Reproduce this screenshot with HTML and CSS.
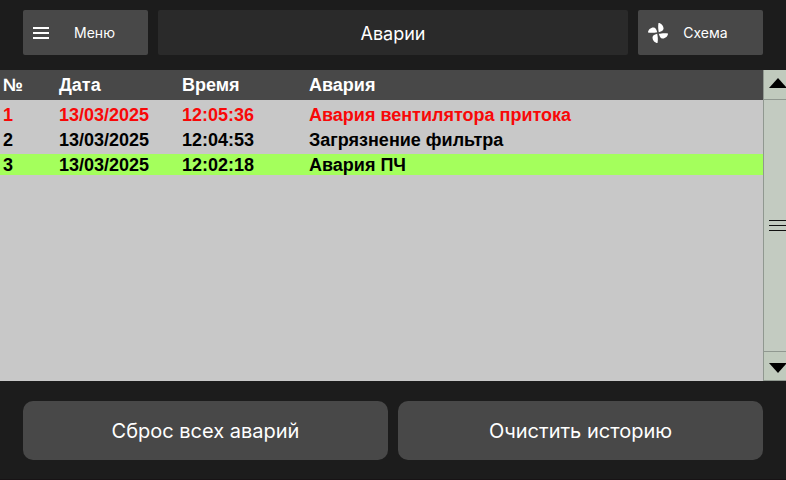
FILE: index.html
```html
<!DOCTYPE html>
<html lang="ru">
<head>
    <meta charset="UTF-8">
    <meta name="viewport" content="width=device-width, initial-scale=1.0">
    <title>Аварии</title>
    <link rel="stylesheet" href="styles.css">
</head>
<body>

    <header class="topbar">
        <button type="button" class="nav-btn">
            <svg class="nav-icon" viewBox="0 0 20 20" aria-hidden="true">
                <path d="M2 5h16M2 10h16M2 15h16" stroke="#fff" stroke-width="2"/>
            </svg>
            <span class="nav-label">Меню</span>
        </button>
        <h1 class="title">Аварии</h1>
        <button type="button" class="nav-btn nav-scheme">
            <svg class="nav-icon" viewBox="0 0 20 20" aria-hidden="true">
                <g fill="#fff">
                    <path id="blade" d="M10.500 0C13 0 15.500 2.500 15.500 5.500C15.500 7.500 14 8.200 10.800 9.200C10.300 7 9.800 3 10.500 0Z"/>
                    <use href="#blade" transform="rotate(90 10 10)"/>
                    <use href="#blade" transform="rotate(180 10 10)"/>
                    <use href="#blade" transform="rotate(270 10 10)"/>
                </g>
            </svg>
            <span class="nav-label">Схема</span>
        </button>
    </header>

    <main class="log">
        <div class="log-body">
            <table class="alarms">
                <thead>
                    <tr>
                        <th class="col-num">№</th>
                        <th class="col-date">Дата</th>
                        <th class="col-time">Время</th>
                        <th>Авария</th>
                    </tr>
                </thead>
                <tbody>
                    <tr class="active">
                        <td>1</td>
                        <td>13/03/2025</td>
                        <td>12:05:36</td>
                        <td>Авария вентилятора притока</td>
                    </tr>
                    <tr>
                        <td>2</td>
                        <td>13/03/2025</td>
                        <td>12:04:53</td>
                        <td>Загрязнение фильтра</td>
                    </tr>
                    <tr class="cleared">
                        <td>3</td>
                        <td>13/03/2025</td>
                        <td>12:02:18</td>
                        <td>Авария ПЧ</td>
                    </tr>
                </tbody>
            </table>
        </div>
        <div class="scrollbar">
            <button type="button" class="scroll-btn scroll-up" aria-label="Вверх">
                <svg class="arrow" viewBox="0 0 18 10"><path d="M0 10L9 0l9 10z"/></svg>
            </button>
            <div class="thumb">
                <span class="grip"></span>
            </div>
            <button type="button" class="scroll-btn scroll-down" aria-label="Вниз">
                <svg class="arrow" viewBox="0 0 18 10"><path d="M0 0l9 10 9-10z"/></svg>
            </button>
        </div>
    </main>

    <footer class="actions">
        <button type="button" class="action-btn">Сброс всех аварий</button>
        <button type="button" class="action-btn">Очистить историю</button>
    </footer>

</body>
</html>
```
FILE: styles.css
```css
* {
    box-sizing: border-box;
}
body {
    display: flex;
    flex-direction: column;
    min-height: 100vh;
    margin: 0;
    background: #1c1c1c;
    color: #fff;
    font-family: Inter, sans-serif;
}
button {
    border: none;
    color: inherit;
    font-family: inherit;
    cursor: pointer;
}
.topbar {
    display: flex;
    gap: 10px;
    padding: 10px 23px 15px;
}
.nav-btn {
    display: flex;
    align-items: center;
    width: 125px;
    height: 45px;
    padding: 0 8px;
    border-radius: 2px;
    background: #484848;
    font-size: 14px;
}
.nav-scheme {
    padding: 0 18px 0 10px;
}
.nav-icon {
    width: 20px;
    height: 20px;
}
.nav-label {
    flex: 1;
    padding-right: 2px;
    text-align: center;
}
.title {
    flex: 1;
    margin: 0;
    border-radius: 2px;
    background: #2a2a2a;
    font-size: 18px;
    font-weight: 400;
    line-height: 47px;
    height: 45px;
    text-align: center;
}
.log {
    display: flex;
    flex: 1;
    background: #c8c8c8;
}
.log-body {
    flex: 1;
}
.alarms {
    width: 100%;
    border-spacing: 0;
    table-layout: fixed;
    color: #000;
    font-family: "Liberation Sans", Arial, sans-serif;
    font-size: 18px;
    font-weight: bold;
    line-height: 20px;
}
.alarms th {
    height: 30px;
    padding: 0 3px 1px;
    background: #484848;
    color: #fff;
    text-align: left;
}
.alarms td {
    padding: 1px 3px 0;
}
.alarms tbody td {
    border-top: 4px solid #c8c8c8;
}
.alarms .active {
    color: #f80808;
}
.alarms .cleared td {
    background-color: #a4ff5c;
}
.col-num {
    width: 56px;
}
.col-date {
    width: 123px;
}
.col-time {
    width: 127px;
}
.scrollbar {
    display: flex;
    flex-direction: column;
    width: 23px;
    border-left: 1px solid #909890;
    background: #c3cbc1;
    overflow: hidden;
}
.scroll-btn {
    display: flex;
    height: 29px;
    padding: 0 0 0 5px;
    background: #c0cabd;
}
.scroll-up {
    align-items: flex-start;
    padding-top: 8px;
}
.scroll-down {
    align-items: flex-end;
    padding-bottom: 8px;
    box-shadow: inset 0 -1px #909890;
}
.arrow {
    flex: none;
    width: 18px;
    height: 10px;
}
.thumb {
    display: flex;
    flex: 1;
    align-items: center;
    padding-left: 5px;
    border: solid #909890;
    border-width: 1px 0;
}
.grip {
    width: 100%;
    height: 11px;
    border: solid #111;
    border-width: 1px 0;
    background: linear-gradient(#111, #111) center / 100% 1px no-repeat;
}
.actions {
    display: flex;
    gap: 10px;
    padding: 20px 23px 19px;
    border-bottom: 1px solid #171315;
}
.action-btn {
    flex: 1;
    height: 59px;
    padding: 0 10px;
    border-radius: 10px;
    background: #484848;
    font-size: 20px;
}
```
